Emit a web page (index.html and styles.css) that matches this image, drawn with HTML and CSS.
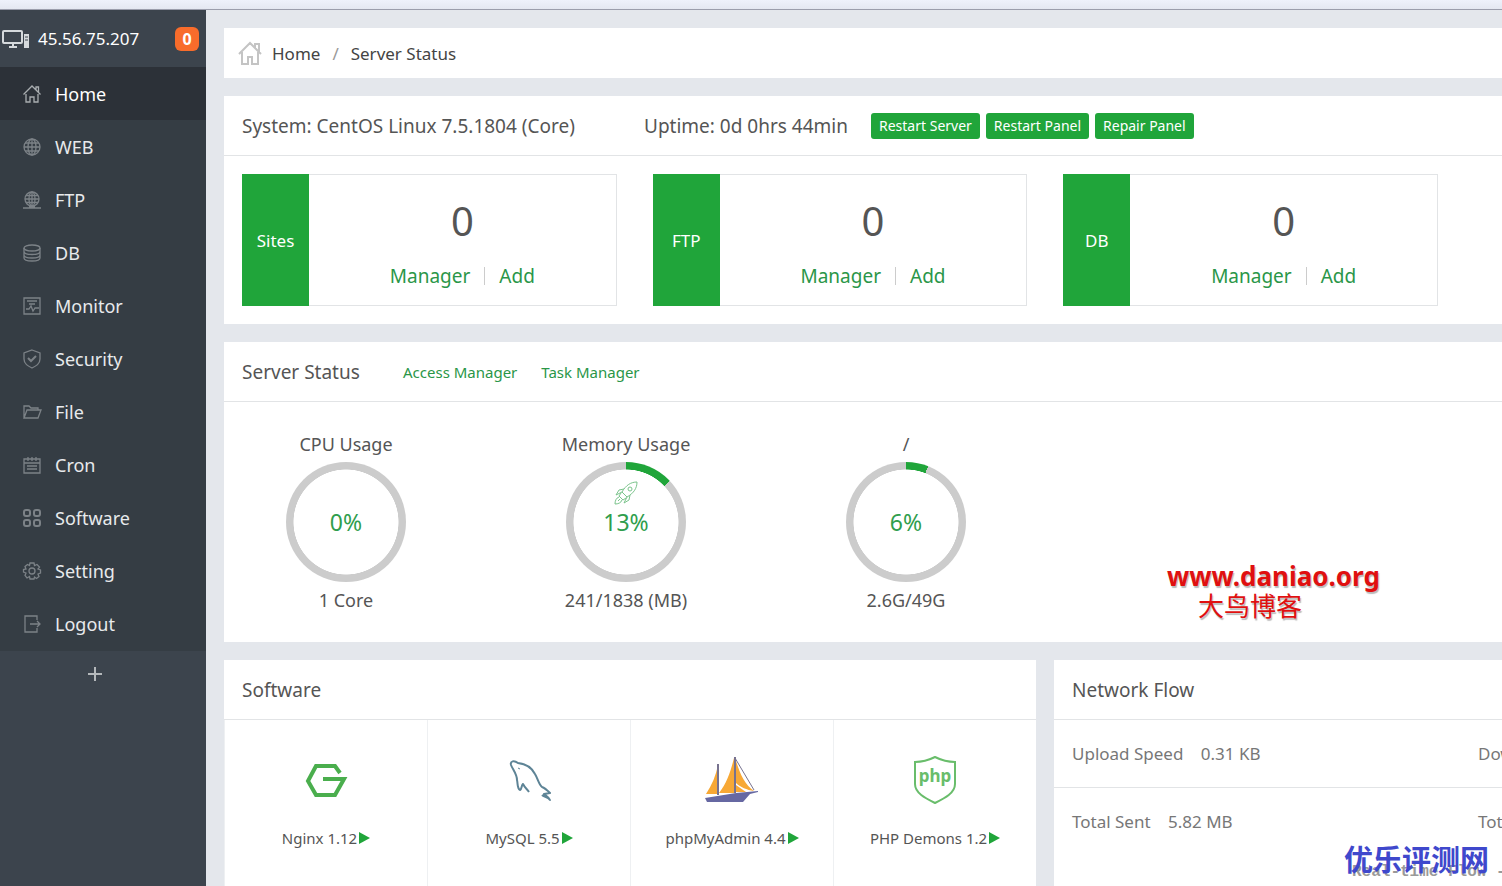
FILE: index.html
```
<!DOCTYPE html>
<html lang="en">
<head>
    <meta charset="UTF-8">
    <meta name="viewport" content="width=device-width, initial-scale=1.0">
    <title>Server Status</title>
    <link rel="stylesheet" href="styles.css">
</head>
<body>
    <div class="topbar"></div>
    <div class="layout">
        <!-- Sidebar -->
        <aside class="sidebar">
            <div class="server">
                <svg class="server-icon" viewBox="0 0 28 20" fill="none" stroke="#d5d9dc" stroke-width="2"><rect x="2" y="2" width="19" height="12" rx="1"/><path d="M8 18h8M12 14v4"/><path d="M23 5h5v14h-5z" fill="#d5d9dc" stroke="none"/><path d="M24 8h3M24 11h3" stroke="#3c444d" stroke-width="1"/></svg>
                <span class="server-ip">45.56.75.207</span>
                <span class="badge">0</span>
            </div>
            <nav class="menu">
                <a class="active" href="#"><svg viewBox="0 0 20 20"><path d="M1.500 10.500L10 2l8.500 8.500M14 5.500V3h2.500v5M4 10v8h4v-5h4v5h4v-8"/></svg>Home</a>
                <a href="#"><svg viewBox="0 0 20 20"><circle cx="10" cy="10" r="8"/><ellipse cx="10" cy="10" rx="4" ry="8"/><path d="M10 2v16M2 10h16M3 6h14M3 14h14"/></svg>WEB</a>
                <a href="#"><svg viewBox="0 0 20 20"><circle cx="10" cy="9" r="7"/><ellipse cx="10" cy="9" rx="3" ry="7"/><path d="M3 9h14M4 5.500h12M4 12.500h12M10 2v14M1 18h18M7 16.500h6"/></svg>FTP</a>
                <a href="#"><svg viewBox="0 0 20 20"><ellipse cx="10" cy="5" rx="8" ry="3"/><path d="M2 5v10c0 4 16 4 16 0V5M2 8.500c0 4 16 4 16 0M2 12c0 4 16 4 16 0"/></svg>DB</a>
                <a href="#"><svg viewBox="0 0 20 20"><path d="M2 2h16v16H2zM5 5h10M7 8h6M4 13h3l2-3 2 5 2-3h4"/></svg>Monitor</a>
                <a href="#"><svg viewBox="0 0 20 20"><path d="M10 1l8 3v6c0 5-4 7-8 9-4-2-8-4-8-9V4z"/><path class="bold" d="M6 9l3 3 5-5"/></svg>Security</a>
                <a href="#"><svg viewBox="0 0 20 20"><path d="M2 16V4h5l2 2h7v2M2 16l3-8h14l-3 8z"/></svg>File</a>
                <a href="#"><svg viewBox="0 0 20 20"><path d="M2 4h16v14H2zM2 8h16M6 2v4M10 2v4M14 2v4M5 11h10M5 14h10"/></svg>Cron</a>
                <a href="#"><svg viewBox="0 0 20 20" class="bold"><rect x="2" y="2" width="6" height="6" rx="2"/><rect x="12" y="2" width="6" height="6" rx="2"/><rect x="2" y="12" width="6" height="6" rx="2"/><rect x="12" y="12" width="6" height="6" rx="2"/></svg>Software</a>
                <a href="#"><svg viewBox="0 0 20 20"><circle cx="10" cy="10" r="3"/><path d="M8 2h4l.5 2.500 2.500-1L17.500 6 16 8l2.500 1v3L16 13l1 2.500-2.500 2-2-1.500L12 18H8l-.5-2.500-2.500 1.500-2-2.500L4 12l-2.500-1V8.500L4 8 3 5.500l2.500-2 2 1z"/></svg>Setting</a>
                <a href="#"><svg viewBox="0 0 20 20"><path d="M15 6V2H3v16h12v-4M8 10h10M15 7l3 3-3 3"/></svg>Logout</a>
            </nav>
            <button class="add-menu" type="button" aria-label="Add menu item"><svg viewBox="0 0 16 16"><path d="M8 1v14M1 8h14"/></svg></button>
        </aside>

        <main class="main">
            <div class="panel breadcrumb">
                <svg viewBox="0 0 24 24"><path d="M1 13L12 2l11 11M17 7V3h4v8M4 11v12h6v-7h4v7h6V11"/></svg>
                <a href="#">Home</a>
                <span class="slash">/</span>
                <span>Server Status</span>
            </div>

            <!-- System info -->
            <section class="panel">
                <div class="panel-head info">
                    <span class="system">System: CentOS Linux 7.5.1804 (Core)</span>
                    <span class="uptime">Uptime: 0d 0hrs 44min</span>
                    <div class="actions">
                        <button type="button">Restart Server</button>
                        <button type="button">Restart Panel</button>
                        <button type="button">Repair Panel</button>
                    </div>
                </div>
                <div class="counters">
                    <div class="counter">
                        <div class="counter-name">Sites</div>
                        <div class="counter-body">
                            <div class="number">0</div>
                            <div class="links"><a href="#">Manager</a><i></i><a href="#">Add</a></div>
                        </div>
                    </div>
                    <div class="counter">
                        <div class="counter-name">FTP</div>
                        <div class="counter-body">
                            <div class="number">0</div>
                            <div class="links"><a href="#">Manager</a><i></i><a href="#">Add</a></div>
                        </div>
                    </div>
                    <div class="counter">
                        <div class="counter-name">DB</div>
                        <div class="counter-body">
                            <div class="number">0</div>
                            <div class="links"><a href="#">Manager</a><i></i><a href="#">Add</a></div>
                        </div>
                    </div>
                </div>
            </section>

            <!-- Server status -->
            <section class="panel status">
                <div class="panel-head">
                    <h2>Server Status</h2>
                    <a class="head-link" href="#">Access Manager</a>
                    <a class="head-link" href="#">Task Manager</a>
                </div>
                <div class="gauges">
                    <div class="gauge">
                        <div>CPU Usage</div>
                        <div class="ring" style="--value: 0"><span>0%</span></div>
                        <div>1 Core</div>
                    </div>
                    <div class="gauge">
                        <div>Memory Usage</div>
                        <div class="ring" style="--value: 13">
                            <svg class="rocket" viewBox="0 0 24 24"><path d="M23 1c-6 0-11 3-15 10l5 5c7-4 10-9 10-15zM10 8L5 9l-3 5 6-3M16 14l-1 5-5 3 3-6M7 12l-2 3 4 4 3-2M5 16c-3 1-4 4-4 7 3 0 6-1 7-4M4 20l2-2"/><circle cx="16" cy="8" r="2"/></svg>
                            <span>13%</span>
                        </div>
                        <div>241/1838 (MB)</div>
                    </div>
                    <div class="gauge">
                        <div>/</div>
                        <div class="ring" style="--value: 6"><span>6%</span></div>
                        <div>2.6G/49G</div>
                    </div>
                </div>
                <div class="blog-mark">
                    <b>www.daniao.org</b>
                    <span lang="zh">大鸟博客</span>
                </div>
            </section>

            <div class="columns">
                <section class="panel">
                    <div class="panel-head"><h2>Software</h2></div>
                    <div class="apps">
                        <a class="app" href="#">
                            <svg viewBox="0 0 48 48"><path d="M38 17l-5-7H14L6 25l8 14h19l9-16H21" fill="none" stroke="#4aae4d" stroke-width="4"/></svg>
                            <span>Nginx 1.12<i class="play"></i></span>
                        </a>
                        <a class="app" href="#">
                            <svg viewBox="0 0 48 48" fill="none" stroke="#5e8496" stroke-width="2" stroke-linejoin="round"><path d="M24 36c-2-3-4-4-6-8-2 2-1 5-3 6-3-2-2-6-3-10 0-6-4-10-6-15-1-4 3-5 7-2 9 1 14 5 17 11 3 5 4 11 7 13 3 1 6 4 8 6l-6 1c2 2 5 3 6 6-2-3-6-3-8-5"/><path d="M13 12l2 1" stroke-width="1"/></svg>
                            <span>MySQL 5.5<i class="play"></i></span>
                        </a>
                        <a class="app" href="#">
                            <svg class="wide" viewBox="0 0 56 48"><path d="M14 9v29H2C8 29 12 19 14 9zM30 2v35H15C23 27 27 14 30 2zM32 5c4 13 9 24 18 30-7-1-14-4-18-8z" fill="#f7a835"/><path d="M32 29l10 7H32z" fill="#f7a835"/><path d="M13 8h2v31h-2zM30 1h2v36h-2z" fill="#77728f"/><path d="M1 42l31-5 22-2v1l-8 2-7 8H3z" fill="#6668a2"/><path d="M31 2l19 32" stroke="#77728f" fill="none"/></svg>
                            <span>phpMyAdmin 4.4<i class="play"></i></span>
                        </a>
                        <a class="app" href="#">
                            <svg viewBox="0 0 48 48"><path d="M24 1c6 3 12 5 20 5v22c0 9-10 14-20 19C14 42 4 37 4 28V6c8 0 14-2 20-5z" fill="none" stroke="#69bd6b" stroke-width="2"/><text x="24" y="26" class="php">php</text></svg>
                            <span>PHP Demons 1.2<i class="play"></i></span>
                        </a>
                    </div>
                </section>

                <section class="panel">
                    <div class="panel-head"><h2>Network Flow</h2></div>
                    <div class="flow">
                        <span>Upload Speed <em>0.31 KB</em></span>
                        <span>Download Speed</span>
                    </div>
                    <div class="flow last">
                        <span>Total Sent <em>5.82 MB</em></span>
                        <span>Total Received</span>
                    </div>
                    <div class="chart-title">Real-time Flow -</div>
                </section>
            </div>
        </main>
    </div>
    <div class="site-mark" lang="zh">优乐评测网</div>
</body>
</html>
```
FILE: styles.css
```
* { box-sizing: border-box; }
body { margin: 0; height: 100vh; overflow: hidden; display: flex; flex-direction: column; position: relative; font-family: "Noto Sans", "Open Sans", sans-serif; font-size: 18px; color: #555; background: #e4e7ec; }
a { color: inherit; text-decoration: none; }
button { font-family: inherit; cursor: pointer; }
h2 { margin: 0; font-size: 19px; font-weight: normal; }
svg { flex: none; }

.topbar { flex: none; height: 10px; background: linear-gradient(#eef1fb, #e4e7f1); border-bottom: 1px solid #9b9dac; }
.layout { display: flex; flex: 1; min-height: 0; }

/* sidebar */
.sidebar { flex: none; width: 206px; background: #3c444d; color: #e8eaec; }
.server { display: flex; align-items: center; height: 57px; padding: 0 7px 0 1px; }
.server-icon { width: 28px; height: 20px; }
.server-ip { margin-left: 9px; font-size: 17px; color: #fff; }
.badge { margin-left: auto; width: 24px; height: 24px; border-radius: 6px; background: #f86c2b; color: #fff; font-size: 16px; font-weight: bold; line-height: 24px; text-align: center; }
.menu { padding-bottom: 1px; background: #353d44; }
.menu a { display: flex; align-items: center; gap: 13px; height: 53px; padding-left: 22px; }
.menu a.active { background: #2c3138; color: #fff; }
.menu svg { width: 20px; height: 20px; fill: none; stroke: #7c8287; stroke-width: 1.3; }
.menu .active svg { stroke: #a9adb0; }
.menu .bold { stroke-width: 2; }
.add-menu { display: block; width: 190px; height: 50px; padding: 0; border: none; background: none; }
.add-menu svg { width: 16px; height: 16px; stroke: #b4b8bb; stroke-width: 2; }

/* main area */
.main { flex: 1; min-width: 0; overflow: hidden; padding: 18px 0 0 18px; }
.panel { margin-bottom: 18px; background: #fff; }
.panel-head { display: flex; align-items: center; height: 60px; padding: 0 18px; border-bottom: 1px solid #e2e4e6; white-space: nowrap; }
.breadcrumb { display: flex; align-items: center; height: 50px; padding-left: 14px; font-size: 17px; color: #444; }
.breadcrumb svg { width: 24px; height: 24px; margin-right: 10px; fill: none; stroke: #c4c4c4; stroke-width: 2; }
.slash { margin: 0 12px; color: #999; }

.info { font-size: 19px; }
.system { width: 402px; }
.uptime { width: 227px; }
.actions { display: flex; gap: 6px; }
.actions button { height: 26px; padding: 0 8px; border: none; border-radius: 3px; background: #20a53a; color: #fff; font-size: 14px; }

.counters { display: grid; grid-template-columns: repeat(3, 1fr); gap: 36px; padding: 18px 64px 18px 18px; }
.counter { display: flex; height: 132px; border: 1px solid #e2e4e6; border-left: none; }
.counter-name { display: flex; align-items: center; justify-content: center; width: 67px; margin: -1px 0; background: #20a53a; color: #fff; font-size: 17px; }
.counter-body { flex: 1; padding-top: 18px; text-align: center; }
.number { font-size: 40px; line-height: 56px; }
.links { display: flex; align-items: center; justify-content: center; margin-top: 14px; font-size: 19px; color: #2a9648; }
.links i { width: 1px; height: 18px; margin: 0 14px; background: #ccc; }

.status { position: relative; }
.head-link { font-size: 15px; color: #2a9648; margin-right: 24px; }
.status h2 { width: 161px; }
.gauges { display: flex; gap: 120px; height: 240px; padding: 30px 0 0 42px; }
.gauge { width: 160px; text-align: center; line-height: 24px; white-space: nowrap; }
.ring { position: relative; display: flex; align-items: center; justify-content: center; width: 120px; height: 120px; margin: 6px auto; border-radius: 50%; background: radial-gradient(circle closest-side, #fff 87%, transparent 88%), conic-gradient(#20a53a calc(var(--value) * 1%), #ccc 0); color: #2f9e4d; font-size: 23px; }
.rocket { position: absolute; top: 19px; left: 48px; width: 24px; height: 24px; fill: none; stroke: #7bc48c; stroke-width: 1; }

.columns { display: grid; grid-template-columns: repeat(2, minmax(812px, 1fr)); gap: 18px; }
.apps { display: grid; grid-template-columns: repeat(4, 1fr); }
.app { display: flex; flex-direction: column; align-items: center; height: 200px; padding-top: 36px; border-left: 1px solid #eef0f2; font-size: 15px; }
.app svg { width: 48px; height: 48px; margin-bottom: 24px; }
.app .wide { width: 56px; }
.app span { display: flex; align-items: center; line-height: 20px; }
.play { border: 6px solid transparent; border-left: 11px solid #20a53a; border-right: none; margin-left: 2px; }
.php { fill: #69bd6b; font-size: 17px; font-weight: bold; text-anchor: middle; }

.flow { display: grid; grid-template-columns: 1fr 1fr; align-items: center; height: 68px; border-bottom: 1px solid #e2e4e6; font-size: 17px; color: #777; }
.flow span { padding-left: 18px; }
.flow em { margin-left: 13px; font-style: normal; }
.flow.last { border-bottom-color: transparent; }
.chart-title { padding-left: 298px; font: bold 16px/32px "Liberation Mono", monospace; color: #999; white-space: nowrap; }

/* overlays */
.blog-mark { position: absolute; top: 218px; left: 943px; color: #e01010; text-shadow: 1px 2px 1px #bbb; }
.blog-mark b { display: block; font-size: 26px; line-height: 32px; }
.blog-mark span { display: block; padding-left: 31px; font: 26px/32px "Liberation Serif", "Noto Sans CJK SC", serif; }
.site-mark { position: absolute; right: 13px; bottom: 7px; font: bold 29px/42px "Noto Sans CJK SC", sans-serif; color: #3f48cc; }
```
